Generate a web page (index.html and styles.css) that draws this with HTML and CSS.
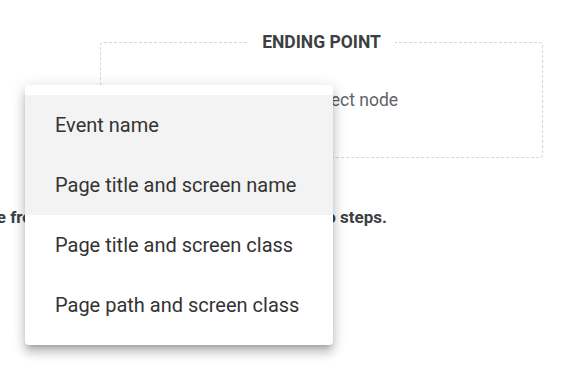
FILE: index.html
```html
<!DOCTYPE html>
<html>
<head>
<meta charset="utf-8">
<link rel="stylesheet" href="styles.css">
</head>
<body>
<div class="page">
  <fieldset class="node-box">
    <legend class="node-legend">ENDING POINT</legend>
    <div class="node-hint">
      <svg class="node-icon" width="24" height="24" viewBox="0 0 24 24"><path d="M12 5v14M5 12h14" stroke="#5f6368" stroke-width="2" fill="none"/></svg>
      <span>Select node</span>
    </div>
  </fieldset>
  <div class="instructions-row">
    <p class="instructions">Choose a node from the list below of all nodes that lead to steps.</p>
  </div>
</div>
<ul class="menu">
  <li class="menu-item active">Event name</li>
  <li class="menu-item active">Page title and screen name</li>
  <li class="menu-item">Page title and screen class</li>
  <li class="menu-item">Page path and screen class</li>
</ul>
</body>
</html>
```
FILE: styles.css
```css
html, body {
  margin: 0;
  padding: 0;
  background: #fff;
  font-family: Roboto, "Noto Sans", sans-serif;
  overflow: hidden;
}
.page {
  width: 567px;
  height: 383px;
  padding-top: 31px;
  box-sizing: border-box;
}
.node-box {
  margin: 0 0 0 100px;
  width: 443px;
  height: 127px;
  box-sizing: border-box;
  border: 1px dashed #d6d6d6;
  border-radius: 4px;
  padding: 0;
  display: flex;
  align-items: center;
  justify-content: center;
}
.node-legend {
  margin: 0 auto;
  padding: 0 14px;
  font-size: 17.5px;
  font-weight: 700;
  color: #3c4043;
  line-height: 22px;
}
.node-hint {
  display: flex;
  align-items: center;
  gap: 8px;
  padding-left: 30px;
  font-size: 17.5px;
  color: #5f6368;
  margin-top: -10px;
}
.instructions-row {
  width: 387px;
  display: flex;
  justify-content: flex-end;
  margin-top: 48px;
}
.instructions {
  margin: 0;
  flex: none;
  white-space: nowrap;
  font-size: 17px;
  line-height: 22px;
  font-weight: 700;
  color: #3c4043;
}
.menu {
  position: absolute;
  left: 25px;
  top: 85px;
  width: 308px;
  margin: 0;
  padding: 10px 0;
  list-style: none;
  background: #fff;
  border-radius: 4px;
  box-shadow: 0 5px 5px -3px rgba(0,0,0,.2), 0 8px 10px 1px rgba(0,0,0,.14), 0 3px 14px 2px rgba(0,0,0,.12);
}
.menu-item {
  height: 60px;
  line-height: 60px;
  padding-left: 30px;
  font-size: 20px;
  color: #333;
}
.menu-item.active {
  background: #f3f3f3;
}
```
